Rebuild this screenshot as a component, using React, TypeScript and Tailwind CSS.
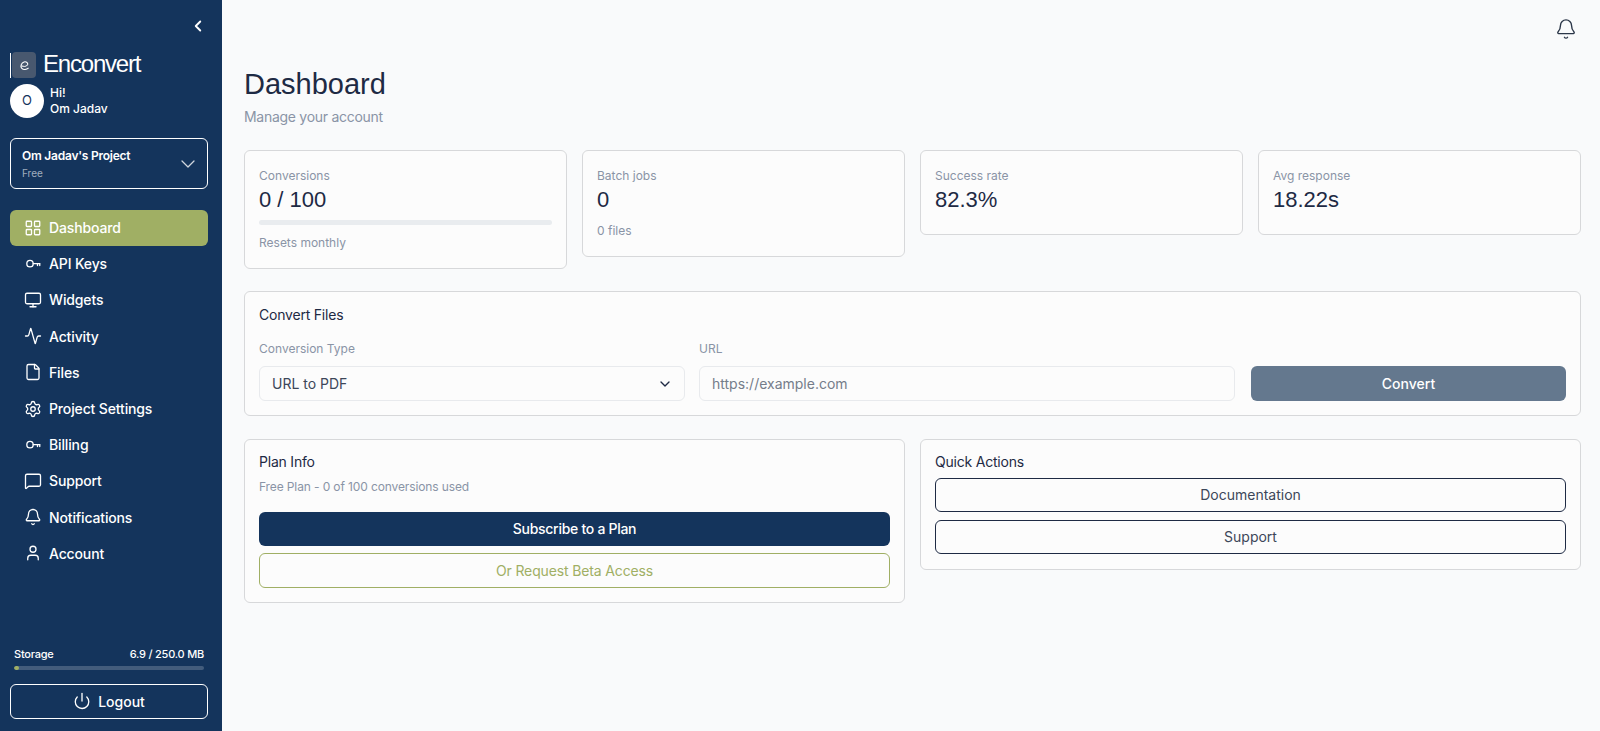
import React from "react";
import {
  Activity,
  Bell,
  ChevronDown,
  ChevronLeft,
  File,
  LayoutGrid,
  MessageSquare,
  Monitor,
  Power,
  Settings,
  User,
} from "lucide-react";

const KeyIcon: React.FC<{ className?: string; strokeWidth?: number }> = ({ className, strokeWidth = 2 }) => (
  <svg viewBox="0 0 24 24" fill="none" stroke="currentColor" strokeWidth={strokeWidth} strokeLinecap="round" strokeLinejoin="round" className={className}>
    <circle cx="8" cy="11.5" r="4.25" />
    <path d="M12.25 11.5h9M18 11.5v2.5M21 11.5v2.5" />
  </svg>
);

const navItems = [
  { label: "Dashboard", icon: LayoutGrid, active: true },
  { label: "API Keys", icon: KeyIcon },
  { label: "Widgets", icon: Monitor },
  { label: "Activity", icon: Activity },
  { label: "Files", icon: File },
  { label: "Project Settings", icon: Settings },
  { label: "Billing", icon: KeyIcon },
  { label: "Support", icon: MessageSquare },
  { label: "Notifications", icon: Bell },
  { label: "Account", icon: User },
];

const Sidebar: React.FC = () => (
  <aside className="w-[222px] shrink-0 h-[731px] bg-[#14345c] text-white flex flex-col pl-2.5 pr-[14px]">
    <div className="h-[52px] flex items-start justify-end pt-[17px] pr-[1px]">
      <ChevronLeft className="w-[18px] h-[18px]" strokeWidth={2.5} />
    </div>
    <div className="flex items-center gap-[7px] h-[26px]">
      <div className="flex items-center gap-[1px] h-[26px]">
        <div className="w-[1px] h-[25px] bg-white" />
        <div className="w-[24px] h-[26px] rounded-[4px] bg-[#48586f] flex items-center justify-center">
          <svg viewBox="0 0 24 24" fill="none" stroke="currentColor" strokeWidth={2} strokeLinecap="round" className="w-[13px] h-[13px]">
            <path d="M7 13c4 1 10 .5 11-3 .5-3.5-3.5-6-7-4.5-5 2-7.5 8.500-4 12 3 3 9 2.500 12-.5" />
          </svg>
        </div>
      </div>
      <span className="text-[24px] leading-none pb-[3px] tracking-[-0.05em] font-[Liberation_Sans,sans-serif]">Enconvert</span>
    </div>
    <div className="flex items-center gap-[6px] mt-[6px] h-[34px]">
      <div className="w-[34px] h-[34px] rounded-full bg-white text-[#14345c] flex items-center justify-center text-[13px]">O</div>
      <div className="text-[12px] leading-[16px] font-medium">
        <div>Hi!</div>
        <div>Om Jadav</div>
      </div>
    </div>
    <div className="mt-[20px] h-[51px] rounded-md border border-white flex items-center justify-between pl-[11px] pr-[7px]">
      <div>
        <div className="text-[12px] leading-[16px] font-semibold tracking-[-0.02em]">Om Jadav's Project</div>
        <div className="text-[10px] leading-[14px] mt-[2px] text-white/60">Free</div>
      </div>
      <ChevronDown className="w-6 h-6 text-white/80" strokeWidth={1.25} />
    </div>
    <nav className="mt-[21px] flex flex-col">
      {navItems.map(({ label, icon: Icon, active }) => (
        <div
          key={label}
          className={`h-[36.2px] flex items-center gap-[7px] pl-[14px] pb-[1px] text-[14px] font-medium tracking-[-0.01em] rounded-md ${active ? "bg-[#a0af64]" : ""}`}
        >
          <Icon className="w-[18px] h-[18px] shrink-0" strokeWidth={1.75} />
          <span>{label}</span>
        </div>
      ))}
    </nav>
    <div className="mt-auto">
      <div className="px-1 flex justify-between text-[11px] leading-[14px] font-medium tracking-[-0.02em]">
        <span>Storage</span>
        <span>6.9 / 250.0 MB</span>
      </div>
      <div className="mx-1 mt-[5px] h-1 rounded-full bg-white/20 overflow-hidden">
        <div className="h-full w-[5px] rounded-full bg-[#a0af64]" />
      </div>
      <div className="mt-[14px] mb-3 h-[35px] rounded-md border border-white flex items-center justify-center gap-[7px] pb-[1px] text-[14px] font-medium">
        <Power className="w-[18px] h-[18px]" strokeWidth={1.75} />
        <span>Logout</span>
      </div>
    </div>
  </aside>
);

const StatCard: React.FC<{ label: string; value: string; children?: React.ReactNode; className: string }> = ({ label, value, children, className }) => (
  <div className={`border border-[#d7d8da] rounded-md bg-[#fcfcfc] px-[14px] pt-[17px] ${className}`}>
    <div className="text-[12px] leading-[16px] text-[#8a94a6]">{label}</div>
    <div className="text-[22px] leading-[28px] mt-[2px] text-[#1e2a44] font-[Liberation_Sans,sans-serif]">{value}</div>
    {children}
  </div>
);

const App: React.FC = () => (
  <div className="flex h-[731px] overflow-hidden bg-[#f9fafb] text-[#1e2a44] font-[Inter,sans-serif]">
    <Sidebar />
    <main className="flex-1 pl-[22px] pr-[19px]">
      <div className="h-[67px] flex justify-end items-start pt-[18px] pr-[4px]">
        <Bell className="w-[22px] h-[22px] text-[#2b3648]" strokeWidth={1.5} />
      </div>
      <h1 className="text-[29px] leading-[34px] text-[#1e2a44] font-[Liberation_Sans,sans-serif]">Dashboard</h1>
      <p className="text-[14px] leading-[20px] mt-[6px] tracking-[-0.02em] text-[#8a94a6]">Manage your account</p>
      <div className="mt-[23px] grid grid-cols-4 gap-[15px] items-start">
        <StatCard label="Conversions" value="0 / 100" className="h-[119px]">
          <div className="mt-[6px] h-[5px] rounded-full bg-[#e9ecef]" />
          <div className="mt-[10px] text-[12px] leading-[16px] text-[#8a94a6]">Resets monthly</div>
        </StatCard>
        <StatCard label="Batch jobs" value="0" className="h-[107px]">
          <div className="mt-[9px] text-[12px] leading-[16px] text-[#8a94a6]">0 files</div>
        </StatCard>
        <StatCard label="Success rate" value="82.3%" className="h-[85px]" />
        <StatCard label="Avg response" value="18.22s" className="h-[85px]" />
      </div>
      <section className="mt-[22px] border border-[#d7d8da] rounded-md bg-[#fcfcfc] px-[14px] h-[125px]">
        <div className="text-[14px] leading-[20px] mt-[13px] tracking-[-0.015em]">Convert Files</div>
        <div className="mt-[16px] grid grid-cols-[426px_535px_1fr] gap-[15px]">
          <div>
            <div className="text-[12px] leading-[16px] text-[#8a94a6]">Conversion Type</div>
            <div className="mt-[9px] h-[35px] rounded-md border border-[#e8eaed] flex items-center justify-between pl-3 pr-[11px] text-[14px] text-[#3d4759]">
              <span>URL to PDF</span>
              <ChevronDown className="w-4 h-4 text-[#1e2a44]" />
            </div>
          </div>
          <div className="-ml-[1px]">
            <div className="text-[12px] leading-[16px] text-[#8a94a6]">URL</div>
            <div className="mt-[9px] h-[35px] rounded-md border border-[#e8eaed] flex items-center px-3 text-[14px] text-[#757d8a]">https://example.com</div>
          </div>
          <div className="pt-[25px] pl-[1px]">
            <div className="h-[35px] rounded-md bg-[#64788e] text-white flex items-center justify-center text-[14px] font-medium">Convert</div>
          </div>
        </div>
      </section>
      <div className="mt-[23px] grid grid-cols-2 gap-[15px] items-start">
        <section className="border border-[#d7d8da] rounded-md bg-[#fcfcfc] px-[14px] h-[164px]">
          <div className="text-[14px] leading-[20px] mt-[12px] tracking-[-0.015em]">Plan Info</div>
          <div className="text-[12px] leading-[16px] mt-[7px] tracking-[-0.01em] text-[#8a94a6]">Free Plan - 0 of 100 conversions used</div>
          <div className="mt-[17px] h-[34px] rounded-md bg-[#14345c] text-white flex items-center justify-center pb-[2px] text-[14px] tracking-[-0.02em] font-medium">Subscribe to a Plan</div>
          <div className="mt-[7px] h-[35px] rounded-md border border-[#a0af64] text-[#a0af64] flex items-center justify-center text-[14px] tracking-[-0.01em]">Or Request Beta Access</div>
        </section>
        <section className="border border-[#d7d8da] rounded-md bg-[#fcfcfc] px-[14px] h-[131px]">
          <div className="text-[14px] leading-[20px] mt-[12px] tracking-[-0.015em]">Quick Actions</div>
          <div className="mt-[6px] h-[34px] rounded-md border border-[#1e2a44] flex items-center justify-center pb-[1px] text-[14px] text-[#3d4759]">Documentation</div>
          <div className="mt-[8px] h-[34px] rounded-md border border-[#1e2a44] flex items-center justify-center pb-[2px] text-[14px] text-[#3d4759]">Support</div>
        </section>
      </div>
    </main>
  </div>
);

export default App;
